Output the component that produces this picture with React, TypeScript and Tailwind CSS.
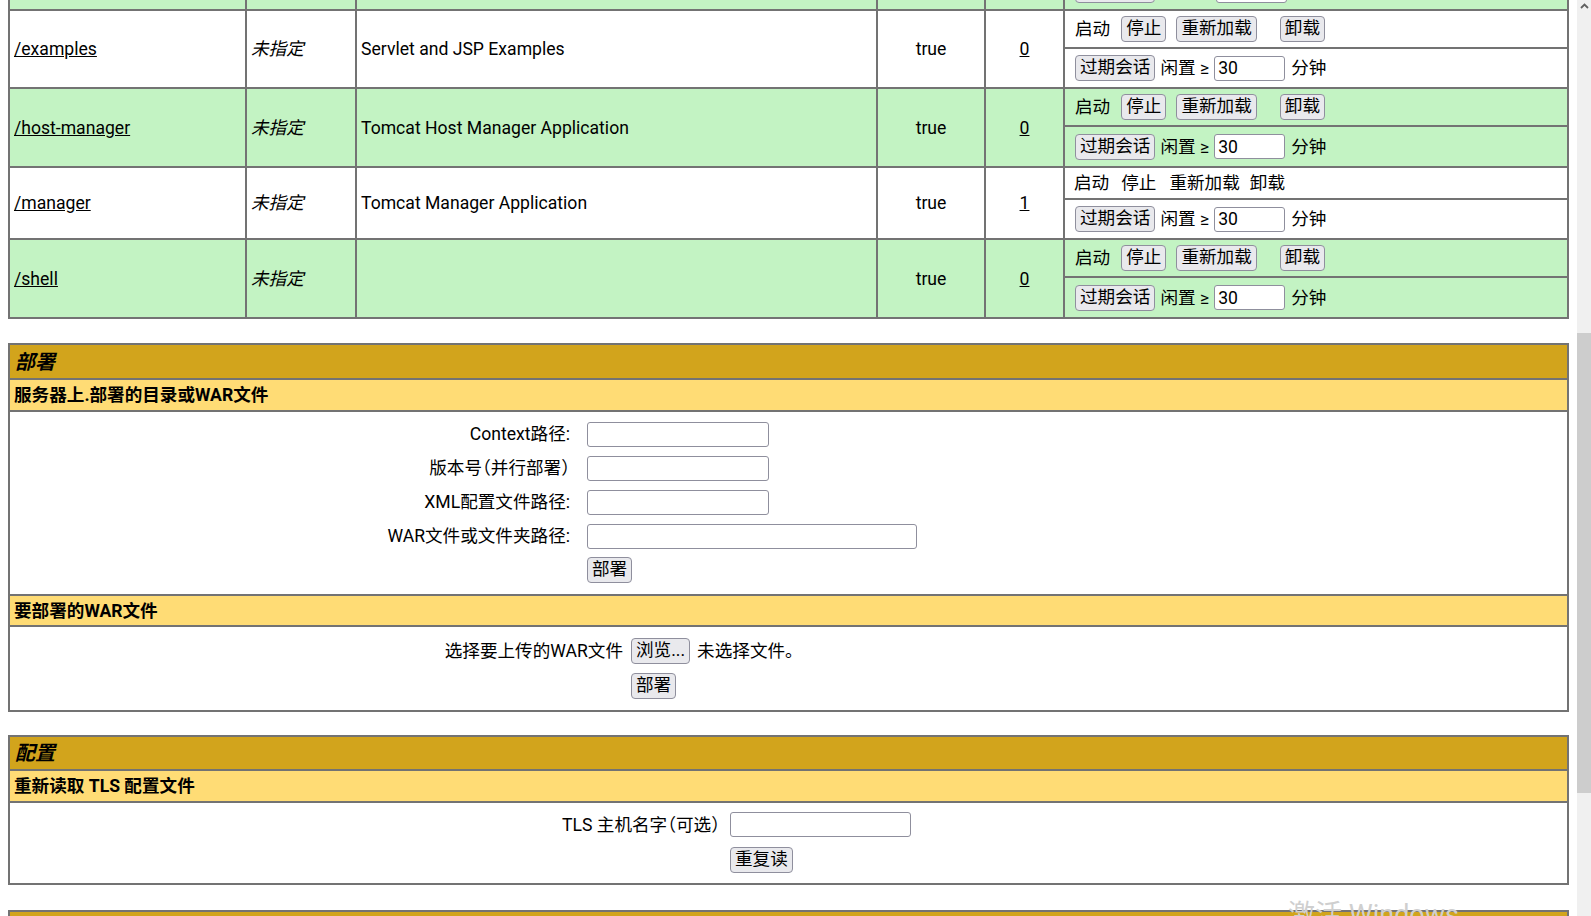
import React from 'react';

type AppRow = {
  path: string;
  name: string;
  sessions: number;
  shaded: boolean;
  running: boolean;
  topH: string;
  bottomH: string;
};

const apps: AppRow[] = [
  { path: '/examples', name: 'Servlet and JSP Examples', sessions: 0, shaded: false, running: true, topH: 'h-[38px]', bottomH: 'h-[40px]' },
  { path: '/host-manager', name: 'Tomcat Host Manager Application', sessions: 0, shaded: true, running: true, topH: 'h-[38px]', bottomH: 'h-[41px]' },
  { path: '/manager', name: 'Tomcat Manager Application', sessions: 1, shaded: false, running: false, topH: 'h-[32px]', bottomH: 'h-[40px]' },
  { path: '/shell', name: '', sessions: 0, shaded: true, running: true, topH: 'h-[38px]', bottomH: 'h-[41px]' },
];

const cell = 'border-2 border-[#737373] px-[4px] align-middle';

function Btn({ children, className = '' }: { children: React.ReactNode; className?: string }) {
  return (
    <button
      type="button"
      className={`h-[26px] px-[4px] rounded-[4px] border border-[#8f8f9d] bg-[#e9e9ed] text-black leading-none whitespace-nowrap ${className}`}
    >
      {children}
    </button>
  );
}

function TextInput({ width, value = '', className = '' }: { width: string; value?: string; className?: string }) {
  return (
    <input
      type="text"
      defaultValue={value}
      className={`h-[25px] ${width} border border-[#8f8f9d] rounded-[3px] px-[3px] bg-white text-black outline-none ${className}`}
    />
  );
}

// full-width brackets drawn half-width, like the reference font does
function Paren({ children }: { children: React.ReactNode }) {
  return <span className="[font-feature-settings:'halt']">{children}</span>;
}

function ExpireRow() {
  return (
    <div className="flex items-center pl-[6px] whitespace-nowrap">
      <Btn>过期会话</Btn>
      <span className="ml-[5px]">闲置 ≥</span>
      <TextInput width="w-[71px]" value="30" className="ml-[5px]" />
      <span className="ml-[6px]">分钟</span>
    </div>
  );
}

function CommandRow({ running }: { running: boolean }) {
  if (!running) {
    return (
      <div className="flex items-center pl-[5px] whitespace-nowrap">
        <span>启动</span>
        <span className="ml-[12px]">停止</span>
        <span className="ml-[13px]">重新加载</span>
        <span className="ml-[10px]">卸载</span>
      </div>
    );
  }
  return (
    <div className="flex items-center pl-[6px] whitespace-nowrap">
      <span>启动</span>
      <Btn className="ml-[11px]">停止</Btn>
      <Btn className="ml-[10px]">重新加载</Btn>
      <Btn className="ml-[23px]">卸载</Btn>
    </div>
  );
}

function AppsTable() {
  return (
    <table className="w-full table-fixed border-collapse">
      <colgroup>
        <col className="w-[237px]" />
        <col className="w-[110px]" />
        <col className="w-[521px]" />
        <col className="w-[108px]" />
        <col className="w-[79px]" />
        <col />
      </colgroup>
      <tbody>
        {/* tail of the row above, scrolled out of view: only the lower edges of its controls show */}
        <tr className="h-[10px] bg-[#c3f3c3]">
          <td className="border-2 border-t-0 border-[#737373] p-0" />
          <td className="border-2 border-t-0 border-[#737373] p-0" />
          <td className="border-2 border-t-0 border-[#737373] p-0" />
          <td className="border-2 border-t-0 border-[#737373] p-0" />
          <td className="border-2 border-t-0 border-[#737373] p-0" />
          <td className="border-2 border-t-0 border-[#737373] p-0 align-bottom">
            <div className="h-[9px] overflow-hidden flex items-end pl-[10px] pb-[6px]">
              <div className="h-[26px] w-[80px] shrink-0 rounded-[4px] border border-[#8f8f9d] bg-[#e9e9ed]" />
              <div className="h-[25px] w-[71px] shrink-0 ml-[61px] rounded-[3px] border border-[#8f8f9d] bg-white" />
            </div>
          </td>
        </tr>
        {apps.map((app) => {
          const bg = app.shaded ? 'bg-[#c3f3c3]' : 'bg-white';
          return (
            <React.Fragment key={app.path}>
              <tr className={`${app.topH} ${bg}`}>
                <td rowSpan={2} className={cell}>
                  <a href="#" className="underline text-black">{app.path}</a>
                </td>
                <td rowSpan={2} className={`${cell} italic`}>未指定</td>
                <td rowSpan={2} className={cell}>{app.name}</td>
                <td rowSpan={2} className={`${cell} text-center`}>true</td>
                <td rowSpan={2} className={`${cell} text-center`}>
                  <a href="#" className="underline text-black">{app.sessions}</a>
                </td>
                <td className={cell}>
                  <CommandRow running={app.running} />
                </td>
              </tr>
              <tr className={`${app.bottomH} ${bg}`}>
                <td className={cell}>
                  <ExpireRow />
                </td>
              </tr>
            </React.Fragment>
          );
        })}
      </tbody>
    </table>
  );
}

function SectionTitle({ children, h }: { children?: React.ReactNode; h: string }) {
  return (
    <tr className={h}>
      <td className="border-2 border-[#737373] bg-[#d2a41c] px-[5px] align-middle text-[20px] font-bold italic">
        {children}
      </td>
    </tr>
  );
}

function SectionHeader({ children, h }: { children: React.ReactNode; h: string }) {
  return (
    <tr className={h}>
      <td className="border-2 border-[#737373] bg-[#ffdc75] px-[4px] align-middle font-bold">{children}</td>
    </tr>
  );
}

function DeployTable() {
  const fields: { label: React.ReactNode; key: string; w: string }[] = [
    { key: 'path', label: 'Context路径:', w: 'w-[182px]' },
    {
      key: 'version',
      label: (
        <>
          版本号<Paren>（</Paren>并行部署<Paren>）</Paren>
        </>
      ),
      w: 'w-[182px]',
    },
    { key: 'config', label: 'XML配置文件路径:', w: 'w-[182px]' },
    { key: 'war', label: 'WAR文件或文件夹路径:', w: 'w-[330px]' },
  ];
  return (
    <table className="w-full border-collapse mt-[24px]">
      <tbody>
        <SectionTitle h="h-[35px]">部署</SectionTitle>
        <SectionHeader h="h-[32px]">服务器上.部署的目录或WAR文件</SectionHeader>
        <tr className="h-[184px]">
          <td className="border-2 border-[#737373] p-0 align-top">
            <div className="flex flex-col pt-[5px] pb-[6px]">
              {fields.map((f) => (
                <div key={f.key} className="flex items-center h-[34px]">
                  <div className="w-[560px] text-right whitespace-nowrap">{f.label}</div>
                  <div className="ml-[17px]">
                    <TextInput width={f.w} />
                  </div>
                </div>
              ))}
              <div className="flex items-center h-[34px]">
                <div className="w-[560px]" />
                <Btn className="ml-[17px]">部署</Btn>
              </div>
            </div>
          </td>
        </tr>
        <SectionHeader h="h-[31px]">要部署的WAR文件</SectionHeader>
        <tr className="h-[85px]">
          <td className="border-2 border-[#737373] p-0 align-top">
            <div className="flex flex-col pt-[7px] pb-[7px]">
              <div className="flex items-center h-[34px]">
                <div className="w-[613px] text-right whitespace-nowrap">选择要上传的WAR文件</div>
                <Btn className="ml-[8px]">浏览...</Btn>
                <span className="ml-[7px]">未选择文件。</span>
              </div>
              <div className="flex items-center h-[35px]">
                <div className="w-[613px]" />
                <Btn className="ml-[8px]">部署</Btn>
              </div>
            </div>
          </td>
        </tr>
      </tbody>
    </table>
  );
}

function ConfigTable() {
  return (
    <table className="w-full border-collapse mt-[23px]">
      <tbody>
        <SectionTitle h="h-[34px]">配置</SectionTitle>
        <SectionHeader h="h-[32px]">重新读取 TLS 配置文件</SectionHeader>
        <tr className="h-[82px]">
          <td className="border-2 border-[#737373] p-0 align-top">
            <div className="flex flex-col pt-[4px] pb-[5px]">
              <div className="flex items-center h-[35px]">
                <div className="w-[710px] text-right whitespace-nowrap">
                  TLS 主机名字<Paren>（</Paren>可选<Paren>）</Paren>
                </div>
                <div className="ml-[10px]">
                  <TextInput width="w-[181px]" />
                </div>
              </div>
              <div className="flex items-center h-[35px]">
                <div className="w-[710px]" />
                <Btn className="ml-[10px]">重复读</Btn>
              </div>
            </div>
          </td>
        </tr>
      </tbody>
    </table>
  );
}

function NextTable() {
  // next section begins just at the bottom edge of the viewport
  return (
    <table className="w-full border-collapse mt-[25px]">
      <tbody>
        <SectionTitle h="h-[34px]" />
      </tbody>
    </table>
  );
}

function Scrollbar() {
  return (
    <div className="w-[14px] h-full bg-[#f0f0f0] flex flex-col shrink-0">
      <div className="h-[14px] flex items-start justify-center pt-[3px]">
        <svg width="9" height="6" viewBox="0 0 9 6">
          <polyline points="1,5 4.5,1.5 8,5" fill="none" stroke="#606060" strokeWidth="1.8" />
        </svg>
      </div>
      <div className="h-[319px]" />
      <div className="h-[460px] bg-[#cdcdcd]" />
    </div>
  );
}

export default function App() {
  return (
    <div className="relative flex w-[1591px] h-[916px] overflow-hidden bg-white text-black text-[17.6px] leading-[22px] font-['Roboto','Noto_Sans_CJK_SC',sans-serif]">
      <div className="w-[1577px] h-full overflow-hidden px-2">
        <AppsTable />
        <DeployTable />
        <ConfigTable />
        <NextTable />
      </div>
      <Scrollbar />
      <div className="absolute left-[1288px] top-[899px] text-[27px] leading-[32px] text-[#cfcfcf] whitespace-nowrap pointer-events-none">
        激活 Windows
      </div>
    </div>
  );
}
